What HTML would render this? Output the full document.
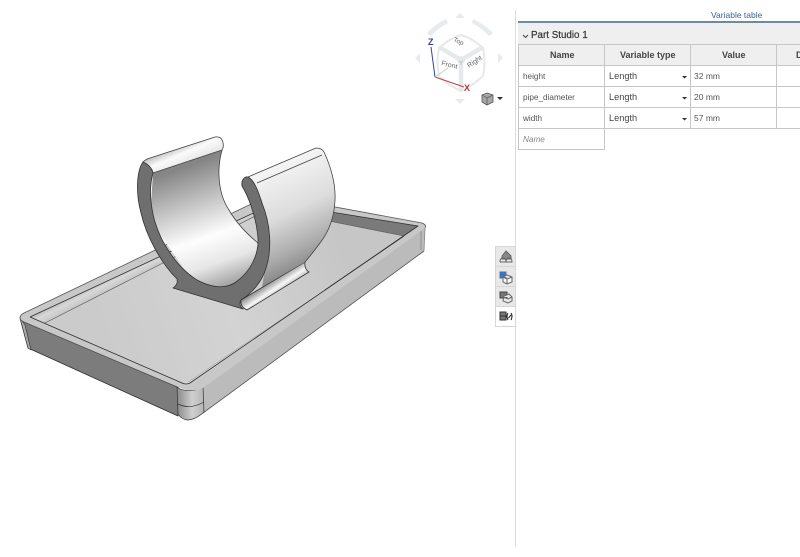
<!DOCTYPE html>
<html><head><meta charset="utf-8">
<style>
html,body{margin:0;padding:0;background:#fff;}
#r{position:relative;width:800px;height:557px;overflow:hidden;background:#fff;font-family:"Liberation Sans",sans-serif;color:#444;filter:blur(.3px);}
.t{position:absolute;white-space:nowrap;}
.c{position:absolute;box-sizing:border-box;border:1px solid #c6c6c6;}
.h{background:#efefef;}
svg{position:absolute;left:0;top:0;}
</style></head>
<body><div id="r">
<svg width="800" height="557" viewBox="0 0 800 557">
<defs>
<linearGradient id="inner" gradientUnits="userSpaceOnUse" x1="190" y1="165" x2="232" y2="285">
<stop offset="0" stop-color="#858585"/><stop offset=".3" stop-color="#c4c4c4"/><stop offset=".58" stop-color="#fdfdfd"/><stop offset=".8" stop-color="#e6e6e6"/><stop offset="1" stop-color="#a0a0a0"/></linearGradient>
<linearGradient id="outer" gradientUnits="userSpaceOnUse" x1="270" y1="170" x2="320" y2="275">
<stop offset="0" stop-color="#f4f4f4"/><stop offset=".4" stop-color="#dcdcdc"/><stop offset=".72" stop-color="#aaa"/><stop offset="1" stop-color="#707070"/></linearGradient>
<linearGradient id="rim" gradientUnits="userSpaceOnUse" x1="178" y1="142" x2="190" y2="170">
<stop offset="0" stop-color="#aaa"/><stop offset=".4" stop-color="#fafafa"/><stop offset="1" stop-color="#ddd"/></linearGradient>
<linearGradient id="foot" gradientUnits="userSpaceOnUse" x1="271" y1="281" x2="279" y2="293">
<stop offset="0" stop-color="#909090"/><stop offset=".6" stop-color="#f8f8f8"/><stop offset="1" stop-color="#bbb"/></linearGradient>
<linearGradient id="side" gradientUnits="userSpaceOnUse" x1="178" y1="0" x2="204" y2="0">
<stop offset="0" stop-color="#8e8e8e"/><stop offset=".55" stop-color="#cfcfcf"/><stop offset="1" stop-color="#b5b5b5"/></linearGradient>
<linearGradient id="bwall" gradientUnits="userSpaceOnUse" x1="75" y1="285" x2="85" y2="305">
<stop offset="0" stop-color="#8e8e8e"/><stop offset=".6" stop-color="#d8d8d8"/><stop offset="1" stop-color="#c0c0c0"/></linearGradient>
<linearGradient id="fl" gradientUnits="userSpaceOnUse" x1="100" y1="320" x2="340" y2="240">
<stop offset="0" stop-color="#cbcbcb"/><stop offset=".5" stop-color="#d3d3d3"/><stop offset="1" stop-color="#c6c6c6"/></linearGradient>
</defs>
<!-- tray -->
<g stroke-linejoin="round">
<path d="M195 390 L425 226 L424 251 L203 413 Q196 419 189 420Z" fill="#bbb" stroke="none"/>
<path d="M424 251 L203 413" fill="none" stroke="#555" stroke-width=".8"/>
<path d="M425 228 L424 251" fill="none" stroke="#888" stroke-width=".8"/>
<path d="M421 231 L421 250" stroke="#888" stroke-width=".8" fill="none"/>
<path d="M20 318 L28 348 L178 416 L178 387 L24 322Z" fill="#7c7c7c" stroke="#2e2e2e" stroke-width=".8"/>
<path d="M20 318 L28 348 L31 350 L25 325Z" fill="#aaa" stroke="#333" stroke-width=".6"/>
<path d="M177 387 Q183 392 195 390 L203 386 L204 412 Q195 420 187 420 Q181 419 178 414Z" fill="url(#side)" stroke="#333" stroke-width=".7"/>
<path d="M178 404 Q190 410 204 402" fill="none" stroke="#333" stroke-width=".7"/>
<path d="M20 318 Q20 315 24 313 L270 195 L422 223 Q427 225 425 228 L203 388 Q193 392 183 389 L24 322 Q20 320 20 318Z" fill="#c8c8c8" stroke="none"/>
<path d="M425 228 Q427 225 422 223 L270 195 L24 313 Q20 315 20 318 Q20 320 24 322 L177 387" fill="none" stroke="#555" stroke-width=".8"/>
<path d="M30 317 L275 203 L418 226 L190 383 Q186 385 182 383Z" fill="#d2d2d2"/>
<path d="M30 317 L275 203 L269 209 L45 323Z" fill="url(#bwall)"/>
<path d="M275 203 L418 226 L404 236 L269 209Z" fill="#7a7a7a"/>
<path d="M30 317 L45 323 L184 383 L182 383Z" fill="#c6c6c6"/>
<path d="M45 323 L269 209 L404 236 L184 383Z" fill="url(#fl)"/>
<path d="M45 323 L269 209 L404 236" fill="none" stroke="#555" stroke-width=".6"/>
<path d="M404 236 L325 290" fill="none" stroke="#333" stroke-width=".8"/>
<path d="M325 290 L188 382" fill="none" stroke="#999" stroke-width=".5"/>
<path d="M30 317 L182 383 Q186 385 190 383 L418 226 L275 203 L30 317" fill="none" stroke="#2e2e2e" stroke-width=".8"/>
</g>
<!-- clip -->
<g stroke-linejoin="round">
<path d="M241 300 L305 262 Q304 269 309 272 L247 310 Q240 307 241 300Z" fill="url(#foot)" stroke="#333" stroke-width=".8"/>
<path d="M153 173 L222 150 C216 172 219 195 229 210 C237 224 247 234 258 243 L250 280 L200 292 L150 220Z" fill="url(#inner)"/>
<path d="M222 150 C216 172 219 195 229 210 C237 224 247 234 258 243" fill="none" stroke="#444" stroke-width=".8"/>
<path d="M143 162 Q146 159 150 158 L215 137 Q222 136 223 143 Q224 147 222 150 L153 173 Q152 167 143 162Z" fill="url(#rim)" stroke="#444" stroke-width=".8"/>
<path d="M248 177 L316 148 Q322 148 324 152 Q336 178 335 200 Q334 225 320 243 Q312 254 305 262 L262 287 L270 240 L262 200 L244 183Z" fill="url(#outer)"/>
<path d="M248 177 L316 148 Q322 148 324 152 Q336 178 335 200 Q334 225 320 243 Q312 254 305 262" fill="none" stroke="#444" stroke-width=".8"/>
<path d="M257 183 L322 155" fill="none" stroke="#444" stroke-width=".8"/>
<path d="M143 162 C136 172 136 195 141 213 C146 235 160 262 177 279 C178 283 176 286 173 288 L243 309 C240 307 239 303 241 300 C252 293 262 282 266 268 C272 250 271 225 262 203 C258 190 254 180 248 177 C244 176 241 181 242 186 C248 196 256 215 258 238 C259 255 250 272 236 282 C225 290 210 287 197 280 C178 268 162 245 155 222 C150 205 149 187 153 173 C152 168 148 164 143 162Z" fill="#6f6f6f" stroke="#333" stroke-width=".8"/>
</g>
<!-- nav cube ring -->
<g fill="#e8ebee">
<path d="M427 33 Q435 24 446 19 L448 23 Q438 28 431 36Z"/>
<path d="M473 19 Q484 24 493 33 L489 36 Q482 28 472 23Z"/>
<path d="M460 13 L465 18 L455 18Z"/>
<path d="M460 104 L465 99 L455 99Z"/>
<path d="M415 58 L420 53 L420 63Z"/>
<path d="M503 58 L498 53 L498 63Z"/>
</g>
<!-- cube -->
<path d="M461 35 Q472 38 483 48 Q486 62 483 76 Q472 86 461 91 Q449 86 439 76 Q436 62 439 48 Q450 38 461 35Z" fill="#fff" stroke="#e6e9ec" stroke-width="2"/>
<path d="M461 60 L461 90 M461 60 L439 47 M461 60 L483 47" stroke="#e6e9ec" stroke-width="4.500" fill="none"/>
<circle cx="461" cy="60" r="4" fill="#e6e9ec"/>
<path d="M431 47 L435 77" stroke="#3a42a0" stroke-width="1" fill="none"/>
<path d="M435 77 L464 87" stroke="#b5454a" stroke-width="1" fill="none"/>
<path d="M435 77 L448 68" stroke="#b8d4b8" stroke-width=".8" fill="none"/>
<text x="428" y="45" font-family="Liberation Sans" font-size="9" font-weight="bold" fill="#35409c">Z</text>
<text x="464" y="91" font-family="Liberation Sans" font-size="9" font-weight="bold" fill="#a83a40">X</text>
<text x="459" y="65" font-family="Liberation Sans" font-size="6" fill="#9ab09a">Y</text>
<text transform="translate(453 41) rotate(25)" font-family="Liberation Sans" font-size="6.500" fill="#666">Top</text>
<text transform="translate(441 65) rotate(14)" font-family="Liberation Sans" font-size="7" fill="#666">Front</text>
<text transform="translate(469 68) rotate(-34)" font-family="Liberation Sans" font-size="7" fill="#666">Right</text>
<!-- small cube icon -->
<path d="M487 93 L493 95 L493 102 L487 105 L482 102 L482 95Z" fill="#a8a8a8" stroke="#555" stroke-width=".8"/>
<path d="M482 95 L487 98 L493 95 M487 98 L487 105" stroke="#555" stroke-width=".7" fill="none"/>
<path d="M497 97 L503 97 L500 100Z" fill="#333"/>
<!-- panel divider -->
<path d="M515.5 10 L515.500 547" stroke="#dcdcdc" stroke-width="1"/>
<!-- toolbar -->
<rect x="495.5" y="246.5" width="20" height="20" fill="#e8e8e8" stroke="#d6d6d6"/>
<rect x="495.5" y="266.5" width="20" height="20" fill="#e8e8e8" stroke="#d6d6d6"/>
<rect x="495.5" y="286.5" width="20" height="20" fill="#e8e8e8" stroke="#d6d6d6"/>
<rect x="495.5" y="306.5" width="20" height="20" fill="#fff" stroke="#d6d6d6"/>
<g fill="none" stroke="#666" stroke-width="1">
<path d="M502 256 L506 251 L511 256 L511 259 L502 259Z" fill="#888"/>
<path d="M500 262 Q500 258 503 258 Q506 258 506 262 M506 262 Q506 258 509 258 Q512 258 512 262 L500 262" />
<rect x="500" y="272" width="6" height="6" fill="#3f74b5" stroke="#3f74b5"/>
<path d="M507 275 L512 277 L512 282 L507 284 L503 282 L503 277Z M503 277 L507 279 L512 277 M507 279 L507 284" fill="#f5f5f5"/>
<rect x="500" y="292" width="7" height="6" fill="#777" stroke="#444"/>
<path d="M504 296 L509 294 L512 297 L512 301 L508 303 L503 301Z M503 297 L508 299 L512 297" fill="#e8e8e8"/>
<rect x="500" y="312" width="6" height="8" fill="#777" stroke="#333"/>
<path d="M500 316 L506 316" stroke="#333"/>
<path d="M508 313 Q506 316 508 320 M511 313 Q513 316 511 320" stroke="#222" stroke-width="1.100"/>
<path d="M508.500 318 L511 315" stroke="#222"/>
</g>
</svg>

<div class="t" style="left:711px;top:10px;font-size:8.5px;color:#39639a;">Variable table</div>
<div style="position:absolute;left:518px;top:21px;width:282px;height:2px;background:#6f8aa0;"></div>
<div class="h" style="position:absolute;left:518px;top:23px;width:282px;height:21px;"></div>
<svg width="800" height="557"><path d="M523 35 L525.500 37.500 L528 35" fill="none" stroke="#444" stroke-width="1"/></svg>
<div class="t" style="left:531px;top:30px;font-size:9.8px;color:#333;-webkit-text-stroke:.2px #333;">Part Studio 1</div>

<div class="c h" style="left:518px;top:44px;width:87px;height:22px;"></div>
<div class="c h" style="left:604px;top:44px;width:87px;height:22px;"></div>
<div class="c h" style="left:690px;top:44px;width:87px;height:22px;"></div>
<div class="c h" style="left:776px;top:44px;width:40px;height:22px;"></div>
<div class="t" style="left:550px;top:50px;font-size:9px;font-weight:bold;color:#444;">Name</div>
<div class="t" style="left:620px;top:50px;font-size:9px;font-weight:bold;color:#444;">Variable type</div>
<div class="t" style="left:722px;top:50px;font-size:9px;font-weight:bold;color:#444;">Value</div>
<div class="t" style="left:796px;top:50px;font-size:9px;font-weight:bold;color:#444;">D</div>

<div class="c" style="left:518px;top:65px;width:87px;height:22px;"></div>
<div class="c" style="left:604px;top:65px;width:87px;height:22px;"></div>
<div class="c" style="left:690px;top:65px;width:87px;height:22px;"></div>
<div class="c" style="left:776px;top:65px;width:40px;height:22px;"></div>
<div class="c" style="left:518px;top:86px;width:87px;height:22px;"></div>
<div class="c" style="left:604px;top:86px;width:87px;height:22px;"></div>
<div class="c" style="left:690px;top:86px;width:87px;height:22px;"></div>
<div class="c" style="left:776px;top:86px;width:40px;height:22px;"></div>
<div class="c" style="left:518px;top:107px;width:87px;height:22px;"></div>
<div class="c" style="left:604px;top:107px;width:87px;height:22px;"></div>
<div class="c" style="left:690px;top:107px;width:87px;height:22px;"></div>
<div class="c" style="left:776px;top:107px;width:40px;height:22px;"></div>
<div class="c" style="left:518px;top:128px;width:87px;height:22px;"></div>

<div class="t" style="left:523px;top:71.500px;font-size:8.2px;color:#555;">height</div>
<div class="t" style="left:523px;top:92.500px;font-size:8.2px;color:#555;">pipe_diameter</div>
<div class="t" style="left:523px;top:113.500px;font-size:8.2px;color:#555;">width</div>
<div class="t" style="left:523px;top:134.500px;font-size:8.2px;color:#888;font-style:italic;">Name</div>

<div class="t" style="left:609px;top:71px;font-size:9.2px;color:#444;">Length</div>
<div class="t" style="left:609px;top:92px;font-size:9.2px;color:#444;">Length</div>
<div class="t" style="left:609px;top:113px;font-size:9.2px;color:#444;">Length</div>
<svg width="800" height="557"><g fill="#333"><path d="M682 76 L687 76 L684.500 78.500Z"/><path d="M682 97 L687 97 L684.500 99.500Z"/><path d="M682 118 L687 118 L684.500 120.500Z"/></g></svg>

<div class="t" style="left:694px;top:71px;font-size:8.5px;color:#555;">32 mm</div>
<div class="t" style="left:694px;top:92px;font-size:8.5px;color:#555;">20 mm</div>
<div class="t" style="left:694px;top:113px;font-size:8.5px;color:#555;">57 mm</div>
</div></body></html>
